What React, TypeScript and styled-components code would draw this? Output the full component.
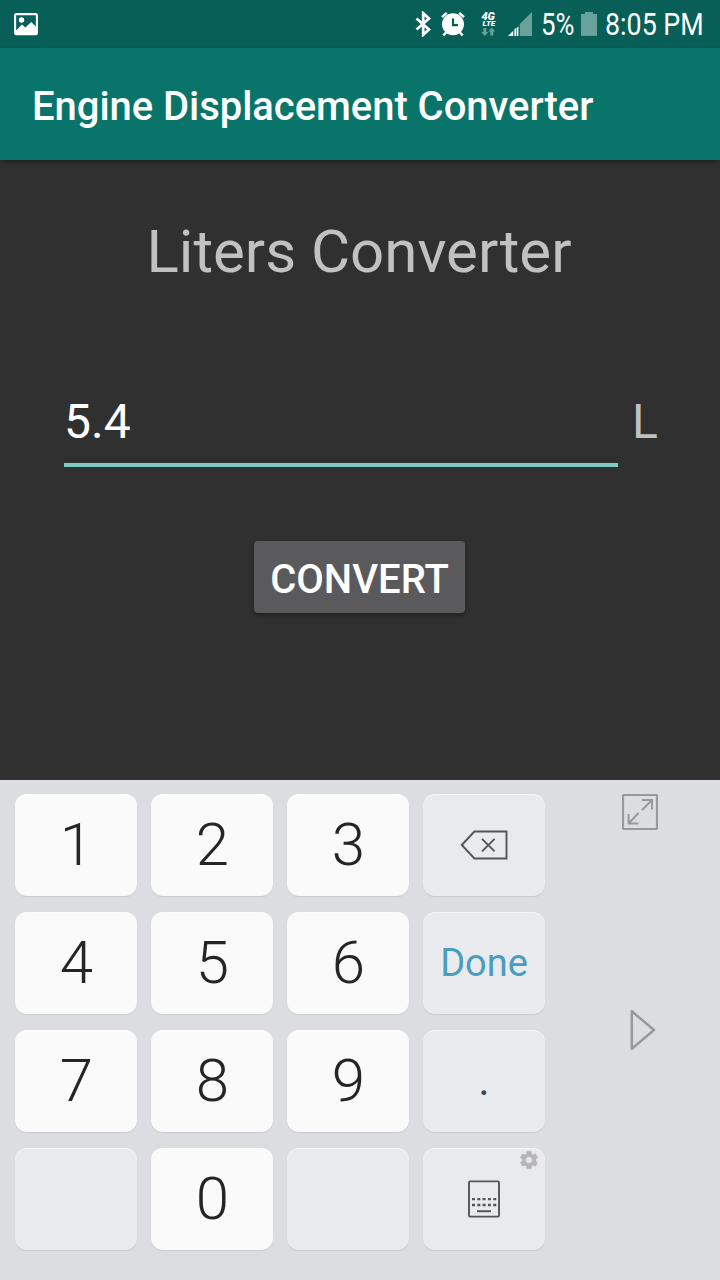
import React from "react";
import styled, { createGlobalStyle } from "styled-components";

const GlobalStyle = createGlobalStyle`
  * { box-sizing: border-box; }
  body { margin: 0; background: #303030; font-family: Roboto, "Liberation Sans", sans-serif; }
  button { border: 0; padding: 0; font: inherit; }
`;

const Screen = styled.div`
  width: 720px;
  height: 1280px;
  display: flex;
  flex-direction: column;
  overflow: hidden;
  background: #303030;
`;

const StatusBar = styled.header`
  height: 48px;
  flex: none;
  display: flex;
  align-items: center;
  padding: 0 16px 0 14px;
  background: #075f57;
  color: #fff;
`;

const StatusIcon = styled.svg<{ $gap?: number }>`
  display: block;
  flex: none;
  margin-right: ${(p) => p.$gap ?? 0}px;
`;

const Spacer = styled.div`
  flex: 1;
`;

const StatusText = styled.div<{ $width: number; $gap?: number; $squeeze: number }>`
  width: ${(p) => p.$width}px;
  margin-right: ${(p) => p.$gap ?? 0}px;
  font-size: 31px;
  line-height: 48px;
  padding-top: 1px;
  white-space: nowrap;
  transform: scaleX(${(p) => p.$squeeze});
  transform-origin: left center;
`;

const AppBar = styled.div`
  height: 112px;
  flex: none;
  display: flex;
  align-items: center;
  padding: 6px 32px 0;
  background: #09756a;
  box-shadow: 0 2px 4px rgba(0, 0, 0, 0.35);
  z-index: 1;
`;

const AppTitle = styled.h1`
  margin: 0;
  color: #fff;
  font-size: 40px;
  font-weight: 500;
  letter-spacing: -0.05px;
  line-height: 48px;
  white-space: nowrap;
`;

const Content = styled.main`
  height: 620px;
  flex: none;
  display: flex;
  flex-direction: column;
  align-items: center;
  color: #c1c1c1;
`;

const Heading = styled.h2`
  margin: 57px 2px 0 0;
  font-size: 60px;
  font-weight: 400;
  line-height: 70px;
`;

const FieldRow = styled.div`
  width: 592px;
  margin-top: 92px;
  display: flex;
  gap: 14px;
  font-size: 48px;
  line-height: 56px;
`;

const Field = styled.div`
  width: 554px;
  height: 88px;
  flex: none;
  padding-top: 15px;
  border-bottom: 4px solid #80cbc4;
  color: #fff;
`;

const Unit = styled.div`
  padding-top: 15px;
`;

const ConvertButton = styled.button`
  width: 211px;
  height: 72px;
  margin: 74px 1px 0 0;
  padding-top: 4px;
  border-radius: 4px;
  background: #5a5a5c;
  box-shadow: 0 2px 5px rgba(0, 0, 0, 0.35);
  color: #fff;
  font-size: 40px;
  font-weight: 500;
`;

const Keyboard = styled.section`
  height: 500px;
  flex: none;
  display: flex;
  padding: 14px 0 0 15px;
  background: #dcdde1;
`;

const KeyGrid = styled.div`
  display: grid;
  grid-template-columns: repeat(4, 122px);
  grid-auto-rows: 102px;
  gap: 16px 14px;
  align-content: start;
`;

const Key = styled.button<{ $muted?: boolean }>`
  position: relative;
  display: flex;
  align-items: center;
  justify-content: center;
  border-radius: 12px;
  background: ${(p) => (p.$muted ? "#e9eaee" : "#fafafa")};
  box-shadow: 0 1px 1px rgba(0, 0, 0, 0.09), inset 0 1px 1px rgba(255, 255, 255, 0.6);
  color: #252525;
`;

const Digit = styled.span`
  padding-left: 1px;
  font-size: 60px;
  font-weight: 300;
  line-height: 70px;
`;

const DoneLabel = styled.span`
  color: #4a9dbd;
  font-size: 38px;
  line-height: 44px;
`;

const PointLabel = styled.span`
  padding-bottom: 1px;
  font-size: 42px;
  line-height: 48px;
  color: #444;
`;

const GearBadge = styled.svg`
  position: absolute;
  top: 1px;
  right: 5px;
`;

const SideTools = styled.aside`
  margin-left: 77px;
  display: flex;
  flex-direction: column;
  gap: 179px;
`;

const PhotoIcon = () => (
  <StatusIcon width="24" height="24" viewBox="0 0 24 24">
    <rect x="1.1" y="2.1" width="21.8" height="20" rx="1.2" fill="none" stroke="#fff" strokeWidth="2.1" />
    <circle cx="7.5" cy="8" r="2.7" fill="#fff" />
    <path d="M2 18.5 8 12.5l3.3 3 6-5.5 5 5V22H2z" fill="#fff" />
  </StatusIcon>
);

const BluetoothIcon = () => (
  <StatusIcon width="16" height="26" viewBox="0 0 16 26" $gap={10}>
    <path d="M1.5 7.5 14 18.6 8.2 23.8V2.2L14 7.4 1.5 18.5" fill="none" stroke="#fff" strokeWidth="2.7" />
  </StatusIcon>
);

const AlarmIcon = () => (
  <StatusIcon width="24" height="26" viewBox="0 0 24 26" $gap={15}>
    <path d="M1 6.2 5.8 1.8M23 6.2 18.2 1.8M5.5 21l-3.2 3.3M18.5 21l3.2 3.3" stroke="#fff" strokeWidth="2.5" />
    <circle cx="12" cy="13.2" r="11" fill="#fff" />
    <path d="M12 7.5v6.6h5" fill="none" stroke="#075f57" strokeWidth="2.2" />
  </StatusIcon>
);

const NetworkIcon = () => (
  <StatusIcon width="18" height="28" viewBox="0 0 18 28" $gap={10}>
    <g fill="#fff" fontFamily="Roboto, sans-serif" fontWeight="900" fontStyle="italic">
      <text x="1.4" y="9.8" fontSize="10" textLength="13.5" lengthAdjust="spacingAndGlyphs">4G</text>
      <text x="2.6" y="15.7" fontSize="7" textLength="12.6" lengthAdjust="spacingAndGlyphs">LTE</text>
    </g>
    <path d="M3.3 18h3v4h2l-3.5 4-3.5-4h2zM10.3 25.5v-4h-2l3.5-4 3.5 4h-2v4z" fill="#69a19b" />
  </StatusIcon>
);

const SignalIcon = () => (
  <StatusIcon width="26" height="26" viewBox="0 0 26 26" $gap={7}>
    <path d="M11.8 25V13L24 1v24z" fill="#69a19b" />
    <path d="M0 25l5.3-5.3V25zM6.4 25v-6.6l1.9-1.9V25zM8.9 25v-8l1.5-1.7v9.7z" fill="#fff" />
  </StatusIcon>
);

const BatteryIcon = () => (
  <StatusIcon width="16" height="26" viewBox="0 0 16 26" $gap={8}>
    <path d="M4 1h8v2h4v22H0V3h4z" fill="#69a19b" />
    <path d="M0 24h16v1H0z" fill="#e0693d" />
  </StatusIcon>
);

const BackspaceIcon = () => (
  <svg width="50" height="32" viewBox="0 0 50 32">
    <path d="M2.8 16 15.4 2.5h32.1v27H15.4z" fill="none" stroke="#555" strokeWidth="1.9" />
    <path d="m23 9.8 12.6 12.6M35.6 9.8 23 22.4" stroke="#555" strokeWidth="1.9" />
  </svg>
);

const LayoutIcon = () => (
  <svg width="32" height="38" viewBox="0 0 32 38">
    <rect x="1" y="1.4" width="30" height="35.2" rx="1" fill="none" stroke="#555" strokeWidth="1.9" />
    <path d="M4 19.2h24.2M4 25h24.2" stroke="#555" strokeWidth="2.3" strokeDasharray="3 2.3" />
    <path d="M9 31.2h14" stroke="#555" strokeWidth="2" />
  </svg>
);

const GearIcon = () => (
  <GearBadge width="22" height="22" viewBox="0 0 24 24" fill="#b5b5b7" stroke="#b5b5b7" strokeWidth=".6">
    <path d="M19.14 12.94c.04-.3.06-.61.06-.94s-.02-.64-.07-.94l2.03-1.58c.18-.14.23-.41.12-.61l-1.92-3.32c-.12-.22-.37-.29-.59-.22l-2.39.96c-.5-.38-1.03-.7-1.62-.94l-.36-2.54c-.04-.24-.24-.41-.48-.41h-3.84c-.24 0-.43.17-.47.41l-.36 2.54c-.59.24-1.13.57-1.62.94l-2.39-.96c-.22-.08-.47 0-.59.22L2.74 8.87c-.12.21-.08.47.12.61l2.03 1.58c-.05.3-.09.63-.09.94s.02.64.07.94l-2.03 1.58c-.18.14-.23.41-.12.61l1.92 3.32c.12.22.37.29.59.22l2.39-.96c.5.38 1.03.7 1.62.94l.36 2.54c.05.24.24.41.48.41h3.84c.24 0 .44-.17.47-.41l.36-2.54c.59-.24 1.13-.56 1.62-.94l2.39.96c.22.08.47 0 .59-.22l1.92-3.32c.12-.22.07-.47-.12-.61zM12 15.6A3.6 3.6 0 1 1 12 8.4a3.6 3.6 0 0 1 0 7.2" />
  </GearBadge>
);

const ExpandIcon = () => (
  <svg width="36" height="36" viewBox="0 0 36 36" fill="none" stroke="#999" strokeWidth="2">
    <rect x="1" y="1" width="34" height="34" rx="1" strokeWidth="2.2" />
    <path d="M20 16 30 6M20 6h10v9.5M16.5 19 6.8 29.3M6.6 20v9.5h9.6" />
  </svg>
);

const NextIcon = () => (
  <svg width="36" height="42" viewBox="0 0 36 42">
    <path d="M9.8 2.3v37.4L32 21z" fill="none" stroke="#999" strokeWidth="2.5" strokeLinejoin="round" />
  </svg>
);

const digitKey = (n: number) => (
  <Key key={n}>
    <Digit>{n}</Digit>
  </Key>
);

export default function App() {
  return (
    <Screen>
      <GlobalStyle />
      <StatusBar>
        <PhotoIcon />
        <Spacer />
        <BluetoothIcon />
        <AlarmIcon />
        <NetworkIcon />
        <SignalIcon />
        <StatusText $width={33} $gap={7} $squeeze={0.83}>5%</StatusText>
        <BatteryIcon />
        <StatusText $width={99} $squeeze={0.865}>8:05 PM</StatusText>
      </StatusBar>
      <AppBar>
        <AppTitle>Engine Displacement Converter</AppTitle>
      </AppBar>
      <Content>
        <Heading>Liters Converter</Heading>
        <FieldRow>
          <Field>5.4</Field>
          <Unit>L</Unit>
        </FieldRow>
        <ConvertButton>CONVERT</ConvertButton>
      </Content>
      <Keyboard>
        <KeyGrid>
          {[1, 2, 3].map(digitKey)}
          <Key $muted aria-label="Backspace"><BackspaceIcon /></Key>
          {[4, 5, 6].map(digitKey)}
          <Key $muted><DoneLabel>Done</DoneLabel></Key>
          {[7, 8, 9].map(digitKey)}
          <Key $muted><PointLabel>.</PointLabel></Key>
          <Key $muted />
          {digitKey(0)}
          <Key $muted />
          <Key $muted aria-label="Keyboard layout">
            <LayoutIcon />
            <GearIcon />
          </Key>
        </KeyGrid>
        <SideTools>
          <ExpandIcon />
          <NextIcon />
        </SideTools>
      </Keyboard>
    </Screen>
  );
}
